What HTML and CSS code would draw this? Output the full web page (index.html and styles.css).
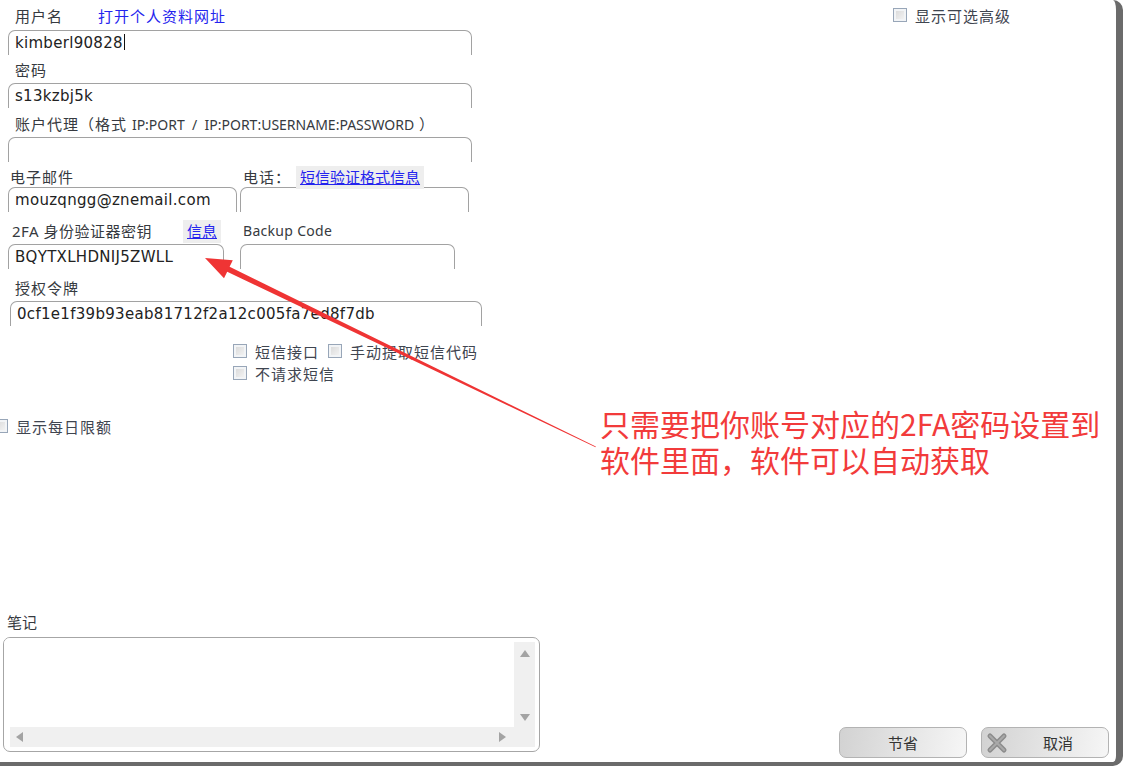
FILE: index.html
```html
<!DOCTYPE html>
<html lang="zh-CN">
<head>
  <meta charset="UTF-8">
  <title>账户设置</title>
  <link rel="stylesheet" href="styles.css">
</head>
<body>
<div class="window">

  <div class="top">
    <div class="form">
      <div class="lbl row1">
        <span class="name">用户名</span><a class="link">打开个人资料网址</a>
      </div>
      <div class="box w-full first">kimberl90828<span class="caret"></span></div>

      <div class="lbl gap5">密码</div>
      <div class="box w-full">s13kzbj5k</div>

      <div class="lbl gap6">账户代理（格式 <span class="latin">IP:PORT &nbsp;/ &nbsp;IP:PORT:USERNAME:PASSWORD</span> ）</div>
      <div class="box w-full"></div>

      <div class="pair gap5">
        <div class="col email">
          <div class="lbl tight pl2">电子邮件</div>
          <div class="box flush">mouzqngg@znemail.com</div>
        </div>
        <div class="col phone">
          <div class="lbl tight pl3">电话：<a class="link boxed">短信验证格式信息</a></div>
          <div class="box flush"></div>
        </div>
      </div>

      <div class="pair gap9">
        <div class="col twofa">
          <div class="lbl pl4"><span class="twofa-name">2FA 身份验证器密钥</span><a class="link boxed info">信息</a></div>
          <div class="box">BQYTXLHDNIJ5ZWLL</div>
        </div>
        <div class="col backup">
          <div class="lbl pl3 small">Backup Code</div>
          <div class="box"></div>
        </div>
      </div>

      <div class="lbl gap9">授权令牌</div>
      <div class="box token">0cf1e1f39b93eab81712f2a12c005fa7ed8f7db</div>

      <div class="checks">
        <div class="check-row">
          <label class="check"><input type="checkbox">短信接口</label>
          <label class="check"><input type="checkbox">手动提取短信代码</label>
        </div>
        <div class="check-row">
          <label class="check"><input type="checkbox">不请求短信</label>
        </div>
      </div>

      <label class="check daily"><input type="checkbox">显示每日限额</label>
    </div>

    <div class="side">
      <label class="check"><input type="checkbox">显示可选高级</label>
    </div>
  </div>

  <div class="bottom">
    <div class="notes-block">
      <div class="notes-label">笔记</div>
      <div class="notes">
        <div class="notes-inner">
          <div class="notes-text"></div>
          <div class="vscroll"><span class="tri up"></span><span class="tri down"></span></div>
          <div class="hscroll"><span class="tri left"></span><span class="tri right"></span></div>
          <div class="corner"></div>
        </div>
      </div>
    </div>
    <div class="buttons">
      <button class="btn">节省</button>
      <button class="btn cancel">
        <svg class="x-icon" width="22" height="22" viewBox="0 0 22 22">
          <path d="M4 4 L18 18 M18 4 L4 18" stroke="#8c8c8c" stroke-width="5" stroke-linecap="round"/>
          <path d="M4 4 L18 18 M18 4 L4 18" stroke="#a9a9a9" stroke-width="2" stroke-linecap="round"/>
        </svg>
        <span class="btn-text">取消</span>
      </button>
    </div>
  </div>

  <!-- annotation overlay -->
  <svg class="arrow" width="1123" height="766" viewBox="0 0 1123 766">
    <polygon fill="#ef3434" points="205,258 232.8,260.3 229.6,266.8 595.8,446.6 595.6,447.2 227.2,271.8 224,278.3"/>
  </svg>
  <div class="note">
    <div class="note-line">只需要把你账号对应的2FA密码设置到</div>
    <div class="note-line">软件里面，软件可以自动获取</div>
  </div>

</div>
</body>
</html>
```

FILE: styles.css
```css
html, body {
  margin: 0;
  padding: 0;
  background: #ffffff;
  overflow: hidden;
}
.window {
  position: relative;
  width: 1123px;
  height: 766px;
  box-sizing: border-box;
  border-right: 7px solid #6b6b6b;
  border-bottom: 4px solid #6b6b6b;
  border-top-right-radius: 10px;
  border-bottom-right-radius: 10px;
  display: flex;
  flex-direction: column;
  font-family: "Noto Sans", "Noto Sans CJK SC", sans-serif;
  color: #363a40;
}
.top {
  display: flex;
}
.form {
  width: 490px;
  padding-left: 8px;
  box-sizing: border-box;
}
.lbl {
  height: 20px;
  line-height: 20px;
  font-size: 15px;
  letter-spacing: 1px;
  padding-left: 7px;
  margin-bottom: 3px;
  white-space: nowrap;
}
.lbl.row1 {
  margin-top: 6px;
  margin-bottom: 4px;
}
.lbl .name {
  display: inline-block;
  width: 83px;
}
.lbl.tight { margin-bottom: 0; }
.lbl.pl2 { padding-left: 2px; }
.lbl.pl3 { padding-left: 3px; }
.lbl.pl4 { padding-left: 4px; }
.lbl.small {
  font-size: 14px;
  letter-spacing: 0.3px;
}
.twofa-name {
  display: inline-block;
  width: 171px;
  font-size: 15px;
  letter-spacing: 0.5px;
}
.latin {
  font-size: 14px;
  letter-spacing: 0;
}
.gap5 { margin-top: 5px; }
.gap6 { margin-top: 6px; }
.gap9 { margin-top: 9px; }

.link {
  color: #2424ee;
}
.link.boxed {
  text-decoration: underline;
  background: #eeeeee;
  padding: 1px 4px 2px;
  margin-left: 5px;
  letter-spacing: 0;
}
.link.info {
  margin-left: 0;
}

.box {
  height: 25px;
  box-sizing: border-box;
  border: 1px solid #a2a2a2;
  border-bottom: none;
  border-radius: 7px 7px 0 0;
  padding-left: 6px;
  font-family: "DejaVu Sans", sans-serif;
  font-size: 15px;
  letter-spacing: 0.3px;
  line-height: 24px;
  color: #222222;
  white-space: nowrap;
}
.box.w-full { width: 464px; }
.box.token {
  width: 472px;
  margin-left: 2px;
}
.caret {
  display: inline-block;
  width: 1px;
  height: 16px;
  background: #111111;
  vertical-align: -2px;
  margin-left: 1px;
}

.pair {
  display: flex;
  gap: 3px;
}
.col.email, .col.phone { width: 229px; }
.col.twofa { width: 216px; }
.col.backup { width: 215px; margin-left: 13px; }

.checks {
  margin-top: 15px;
  padding-left: 225px;
}
.check-row {
  display: flex;
  gap: 9px;
  height: 20px;
  margin-bottom: 2px;
}
.check {
  display: inline-flex;
  align-items: center;
  height: 20px;
  font-size: 15px;
  letter-spacing: 1px;
  color: #3f4550;
  white-space: nowrap;
}
.check input {
  appearance: none;
  -webkit-appearance: none;
  width: 14px;
  height: 14px;
  margin: 0 8px 0 0;
  box-sizing: border-box;
  border: 1px solid #98a6b8;
  background: linear-gradient(135deg, #d6d6d6, #f7f7f7);
  box-shadow: inset 0 0 0 2px #f2f4f6;
}
.daily {
  margin-top: 31px;
  margin-left: -14px;
}

.side {
  flex: 1;
  padding-left: 403px;
  padding-top: 5px;
}

.bottom {
  margin-top: auto;
  display: flex;
  justify-content: space-between;
  align-items: flex-end;
  padding-bottom: 4px;
}
.notes-block {
  margin-left: 3px;
  margin-bottom: 6px;
}
.notes-label {
  height: 20px;
  line-height: 20px;
  font-size: 15px;
  padding-left: 4px;
  margin-bottom: 5px;
}
.notes {
  width: 537px;
  height: 115px;
  box-sizing: border-box;
  border: 1px solid #a6a6a6;
  border-radius: 7px;
  padding: 4px 4px 4px 6px;
}
.notes-inner {
  height: 100%;
  display: grid;
  grid-template-columns: 1fr 21px;
  grid-template-rows: 1fr 20px;
  background: #f0f0f0;
}
.notes-text {
  background: #ffffff;
  margin: -4px 0 0 -6px;
  border-radius: 6px 0 0 0;
}
.vscroll, .hscroll {
  display: flex;
  justify-content: space-between;
  align-items: center;
}
.vscroll {
  flex-direction: column;
  padding: 8px 0 6px;
}
.hscroll { padding: 0 8px 0 6px; }
.tri {
  width: 0;
  height: 0;
  border: 5px solid transparent;
}
.tri.up { border-bottom: 7px solid #a3a3a3; border-top: 0; }
.tri.down { border-top: 7px solid #a3a3a3; border-bottom: 0; }
.tri.left { border-right: 7px solid #a3a3a3; border-left: 0; }
.tri.right { border-left: 7px solid #a3a3a3; border-right: 0; }

.buttons {
  display: flex;
  gap: 14px;
  margin-right: 7px;
}
.btn {
  width: 128px;
  height: 31px;
  box-sizing: border-box;
  border: 1px solid #b3b3b3;
  border-radius: 7px;
  background: linear-gradient(100deg, #d2d2d2, #f6f6f6);
  font-family: "Noto Sans CJK SC", sans-serif;
  font-size: 15px;
  color: #333333;
  padding: 0;
}
.btn.cancel {
  display: flex;
  align-items: center;
  padding-left: 4px;
}
.btn-text {
  flex: 1;
  text-align: center;
}

.arrow {
  position: absolute;
  left: 0;
  top: 0;
  pointer-events: none;
}
.note {
  position: absolute;
  left: 600px;
  top: 405px;
  font-family: "Noto Sans CJK SC", sans-serif;
  font-size: 30px;
  color: #f23b3b;
  white-space: nowrap;
}
.note-line {
  height: 36px;
  line-height: 36px;
}
```
